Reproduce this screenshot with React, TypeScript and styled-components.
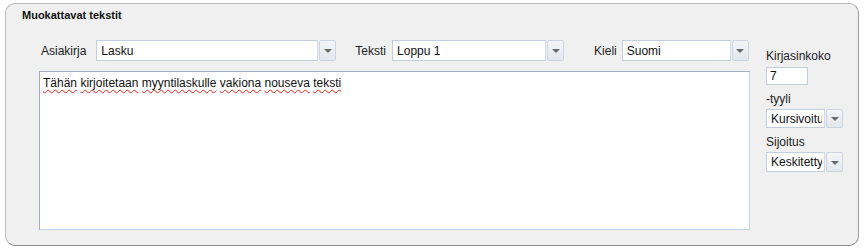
import styled, { createGlobalStyle } from "styled-components";

const GlobalStyle = createGlobalStyle`
  html, body {
    margin: 0;
    padding: 0;
    background: #ffffff;
  }
  body {
    font-family: "Liberation Sans", Arial, sans-serif;
    font-size: 12px;
    color: #1a1a1a;
  }
`;

interface ComboProps {
  value: string;
  width: number;
  height?: number;
}

const defaultText = "Tähän kirjoitetaan myyntilaskulle vakiona nouseva teksti";

// yksinkertainen alasvetovalikko (vain ulkoasu)
function Combo({ value, width, height = 21 }: ComboProps) {
  return (
    <ComboBox $width={width} $height={height}>
      <ComboField>
        <ComboText>{value}</ComboText>
      </ComboField>
      <ComboButton>
        <Arrow />
      </ComboButton>
    </ComboBox>
  );
}

function App() {
  const words = defaultText.split(" ");

  return (
    <Page>
      <GlobalStyle />
      <Panel>
        <Title>Muokattavat tekstit</Title>
        <Main>
          <LeftSection>
            <TopRow>
              <FieldLabel $gap={10} $offset={2}>Asiakirja</FieldLabel>
              <Combo value="Lasku" width={240} />
              <FieldLabel $gap={6} $offset={19}>Teksti</FieldLabel>
              <Combo value="Loppu 1" width={172} />
              <FieldLabel $gap={5} $offset={30}>Kieli</FieldLabel>
              <Combo value="Suomi" width={127} />
            </TopRow>
            <TextArea>
              {words.map((word, i) => (
                <span key={i}>
                  <Spelled>{word}</Spelled>
                  {i < words.length - 1 ? " " : ""}
                </span>
              ))}
            </TextArea>
          </LeftSection>
          <RightColumn>
            <SideLabel>Kirjasinkoko</SideLabel>
            <SizeInput>7</SizeInput>
            <SideLabel $top={7}>-tyyli</SideLabel>
            <Combo value="Kursivoitu" width={77} height={19} />
            <SideLabel $top={7}>Sijoitus</SideLabel>
            <Combo value="Keskitetty" width={77} height={20} />
          </RightColumn>
        </Main>
      </Panel>
    </Page>
  );
}

export default App;

const Page = styled.div`
  width: 866px;
  height: 249px;
  box-sizing: border-box;
  padding: 3px 8px 3px 5px;
`;

const Panel = styled.section`
  box-sizing: border-box;
  width: 854px;
  height: 243px;
  background: #f0f0f0;
  border: 1px solid #bcbcbc;
  border-right-color: #9c9c9c;
  border-bottom-color: #8e8e8e;
  border-radius: 10px;
  padding: 5px 0 0 16px;
  display: flex;
  flex-direction: column;
`;

const Title = styled.h2`
  margin: 0;
  font-size: 11px;
  line-height: 13px;
  font-weight: bold;
  color: #111;
`;

const Main = styled.div`
  display: flex;
  align-items: flex-start;
  margin-top: 18px;
  margin-left: 17px;
  gap: 16px;
`;

const LeftSection = styled.div`
  display: flex;
  flex-direction: column;
  gap: 10px;
`;

const TopRow = styled.div`
  display: flex;
  align-items: center;
  height: 21px;
`;

const FieldLabel = styled.span<{ $gap: number; $offset: number }>`
  margin-left: ${(p) => p.$offset}px;
  margin-right: ${(p) => p.$gap}px;
  font-size: 12px;
  color: #222;
  white-space: nowrap;
`;

const ComboBox = styled.div<{ $width: number; $height: number }>`
  box-sizing: border-box;
  width: ${(p) => p.$width}px;
  height: ${(p) => p.$height}px;
  display: flex;
  flex-shrink: 0;
`;

const ComboField = styled.div`
  flex: 1;
  min-width: 0;
  box-sizing: border-box;
  background: #ffffff;
  border: 1px solid #c3cedd;
  border-right-color: #d2dbe7;
  display: flex;
  align-items: center;
  padding: 0 2px 0 4px;
  overflow: hidden;
`;

const ComboText = styled.span`
  font-size: 12px;
  color: #111;
  white-space: nowrap;
  overflow: hidden;
`;

const ComboButton = styled.div`
  box-sizing: border-box;
  width: 17px;
  flex-shrink: 0;
  margin-left: 1px;
  background: linear-gradient(#f3f5f8, #e2e7ee);
  border: 1px solid #cbd4e0;
  border-radius: 2px;
  display: flex;
  align-items: center;
  justify-content: center;
`;

const Arrow = styled.span`
  width: 0;
  height: 0;
  border-left: 4px solid transparent;
  border-right: 4px solid transparent;
  border-top: 4px solid #6a6a6a;
  margin-top: 1px;
`;

const TextArea = styled.div`
  box-sizing: border-box;
  width: 711px;
  height: 159px;
  background: #ffffff;
  border: 1px solid #c4d4ea;
  border-top-color: #a3acb9;
  border-left-color: #a3acb9;
  padding: 4px 3px;
  font-size: 12px;
  line-height: 15px;
  color: #111;
`;

const Spelled = styled.span`
  text-decoration: underline wavy #e2231a;
  text-decoration-thickness: 1px;
  text-underline-offset: 2px;
`;

const RightColumn = styled.div`
  display: flex;
  flex-direction: column;
  align-items: flex-start;
  padding-top: 9px;
`;

const SideLabel = styled.span<{ $top?: number }>`
  margin-top: ${(p) => p.$top ?? 0}px;
  margin-bottom: 3px;
  font-size: 12px;
  line-height: 14px;
  color: #222;
`;

const SizeInput = styled.div`
  box-sizing: border-box;
  width: 42px;
  height: 18px;
  margin-top: 1px;
  background: #ffffff;
  border: 1px solid #c3cedd;
  padding-left: 3px;
  font-size: 12px;
  line-height: 16px;
  color: #111;
`;
